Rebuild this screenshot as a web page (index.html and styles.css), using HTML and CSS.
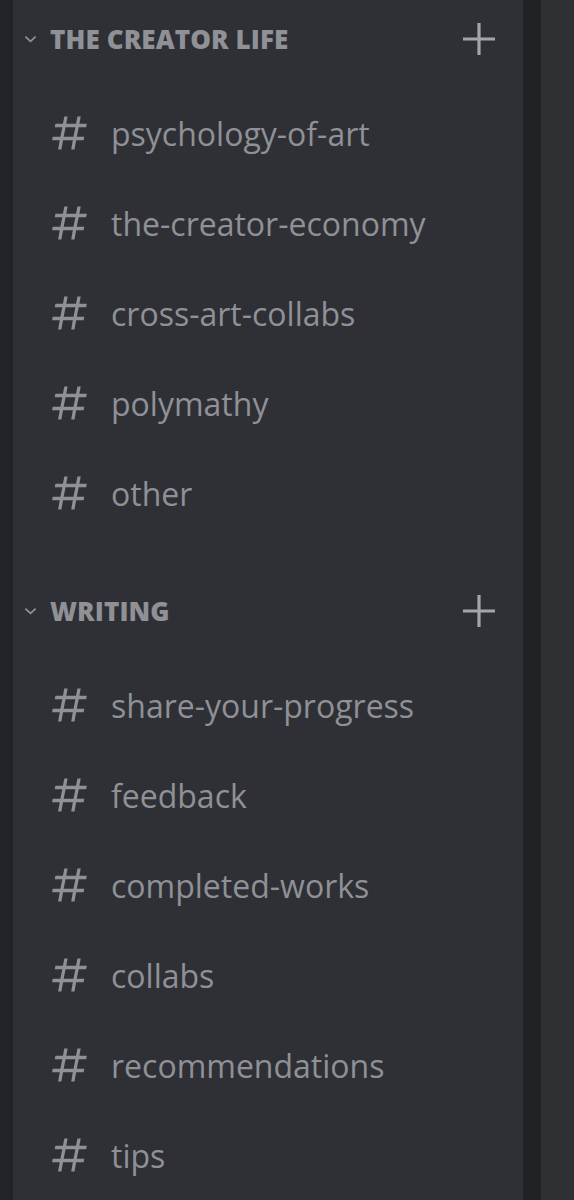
FILE: index.html
```html
<!DOCTYPE html>
<html lang="en">
<head>
<meta charset="utf-8">
<title>Channels</title>
<link rel="stylesheet" href="styles.css">
</head>
<body>
<div class="app">
  <div class="rail"></div>
  <nav class="sidebar">
    <section class="category first">
      <header class="cat-head">
        <svg class="chev" viewBox="0 0 14 8" aria-hidden="true"><path d="M1.5 1.5 L7 6.5 L12.5 1.5" fill="none" stroke="currentColor" stroke-width="2"/></svg>
        <span class="cat-name">THE CREATOR LIFE</span>
        <svg class="plus" viewBox="0 0 32 32" aria-hidden="true"><path d="M16 0 V32 M0 16 H32" stroke="currentColor" stroke-width="3.2"/></svg>
      </header>
      <ul class="channels">
        <li class="channel"><svg class="hash" viewBox="0 0 24 24"><use href="#hash"/></svg><span>psychology-of-art</span></li>
        <li class="channel"><svg class="hash" viewBox="0 0 24 24"><use href="#hash"/></svg><span>the-creator-economy</span></li>
        <li class="channel"><svg class="hash" viewBox="0 0 24 24"><use href="#hash"/></svg><span>cross-art-collabs</span></li>
        <li class="channel"><svg class="hash" viewBox="0 0 24 24"><use href="#hash"/></svg><span>polymathy</span></li>
        <li class="channel"><svg class="hash" viewBox="0 0 24 24"><use href="#hash"/></svg><span>other</span></li>
      </ul>
    </section>
    <section class="category">
      <header class="cat-head">
        <svg class="chev" viewBox="0 0 14 8" aria-hidden="true"><path d="M1.5 1.5 L7 6.5 L12.5 1.5" fill="none" stroke="currentColor" stroke-width="2"/></svg>
        <span class="cat-name">WRITING</span>
        <svg class="plus" viewBox="0 0 32 32" aria-hidden="true"><path d="M16 0 V32 M0 16 H32" stroke="currentColor" stroke-width="3.2"/></svg>
      </header>
      <ul class="channels">
        <li class="channel"><svg class="hash" viewBox="0 0 24 24"><use href="#hash"/></svg><span>share-your-progress</span></li>
        <li class="channel"><svg class="hash" viewBox="0 0 24 24"><use href="#hash"/></svg><span>feedback</span></li>
        <li class="channel"><svg class="hash" viewBox="0 0 24 24"><use href="#hash"/></svg><span>completed-works</span></li>
        <li class="channel"><svg class="hash" viewBox="0 0 24 24"><use href="#hash"/></svg><span>collabs</span></li>
        <li class="channel"><svg class="hash" viewBox="0 0 24 24"><use href="#hash"/></svg><span>recommendations</span></li>
        <li class="channel"><svg class="hash" viewBox="0 0 24 24"><use href="#hash"/></svg><span>tips</span></li>
      </ul>
    </section>
  </nav>
  <div class="divider"></div>
  <div class="main"></div>
</div>
<svg width="0" height="0" style="position:absolute">
  <defs>
    <path id="hash" fill="currentColor" d="M5.5 21 L6.4 16 H2.2 L2.6 14.1 H6.75 L7.8 8.9 H3.65 L4.05 7 H8.15 L8.9 3 H10.7 L9.95 7 H15.3 L16.05 3 H17.85 L17.1 7 H21.2 L20.8 8.9 H16.75 L15.7 14.1 H19.8 L19.4 16 H15.35 L14.45 21 H12.65 L13.55 16 H8.2 L7.3 21 Z M9.6 8.9 L8.55 14.1 H13.9 L14.95 8.9 Z"/>
  </defs>
</svg>
</body>
</html>
```

FILE: styles.css
```css
* { box-sizing: border-box; }
html, body { margin: 0; padding: 0; }
body {
  background: #222327;
  font-family: "Open Sans", "Noto Sans", sans-serif;
  color: #8e9096;
}
.app {
  display: grid;
  grid-template-columns: 13px 510px 18px 1fr;
  height: 1200px;
  overflow: hidden;
}
.rail { background: #222327; }
.divider { background: #212226; }
.main { background: #2e3034; }
.sidebar { background: #2e3035; }

.category.first { margin-top: 0; }
.category { margin-top: 34px; }

.cat-head {
  display: flex;
  align-items: center;
  height: 78px;
  padding: 0 28px 0 11px;
  margin-bottom: 10px;
}
.chev { width: 13px; height: 8px; color: #8e9096; margin-right: 13px; }
.cat-name {
  flex: 1;
  font-weight: 800;
  font-size: 26px;
  letter-spacing: 0.1px;
  color: #8f9196;
}
.plus { width: 32px; height: 32px; color: #a3a5a9; }

.channels { list-style: none; margin: 0; padding: 0; }
.channel {
  display: flex;
  align-items: center;
  height: 90px;
  padding-left: 35px;
  font-size: 32px;
  color: #8f9196;
}
.hash { width: 44px; height: 44px; color: #8f9196; margin-right: 19px; flex: none; }
```
